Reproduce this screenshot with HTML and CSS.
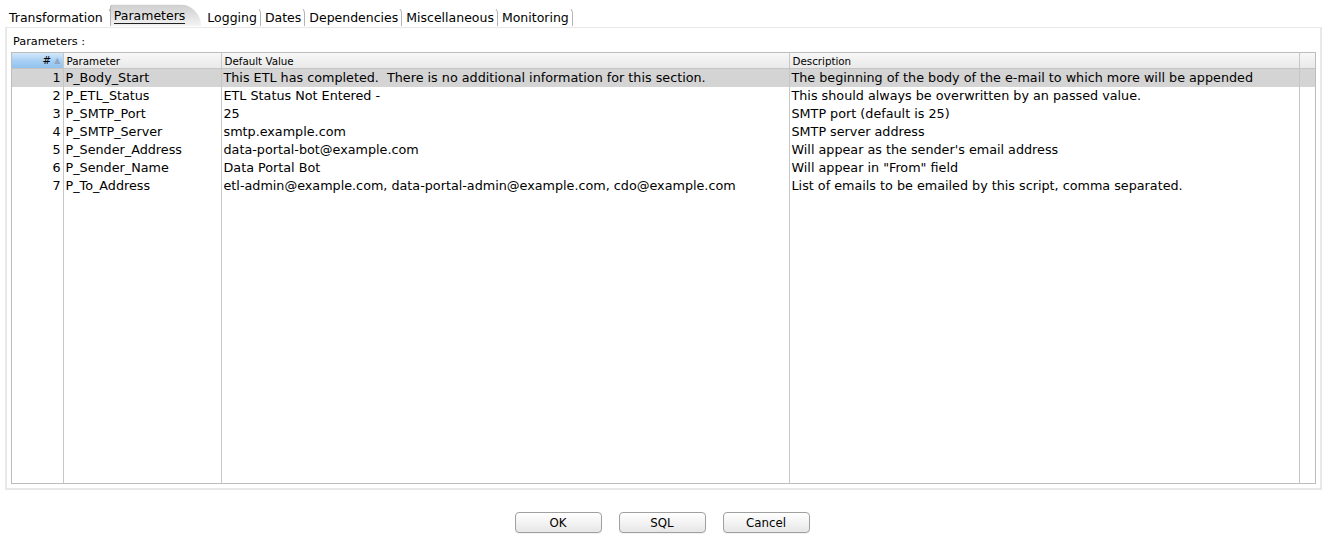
FILE: index.html
```html
<!DOCTYPE html>
<html>
<head>
<meta charset="utf-8">
<link rel="stylesheet" href="styles.css">
</head>
<body>
<div class="tabs">
  <span class="tab first">Transformation</span>
  <span class="tab active"><span class="u">Parameters</span></span>
  <span class="tab">Logging</span>
  <span class="tab">Dates</span>
  <span class="tab">Dependencies</span>
  <span class="tab">Miscellaneous</span>
  <span class="tab">Monitoring</span>
</div>
<div class="panel">
  <div class="label">Parameters :</div>
  <div class="grid-wrap">
    <table class="grid">
      <colgroup>
        <col class="c1"><col class="c2"><col class="c3"><col class="c4"><col class="c5">
      </colgroup>
      <thead>
        <tr>
          <th class="num sorted"># <span class="arrow">▲</span></th>
          <th>Parameter</th>
          <th>Default Value</th>
          <th>Description</th>
          <th></th>
        </tr>
      </thead>
      <tbody>
        <tr class="sel"><td class="num">1</td><td>P_Body_Start</td><td>This ETL has completed.&nbsp; There is no additional information for this section.</td><td>The beginning of the body of the e-mail to which more will be appended</td><td></td></tr>
        <tr><td class="num">2</td><td>P_ETL_Status</td><td>ETL Status Not Entered -</td><td>This should always be overwritten by an passed value.</td><td></td></tr>
        <tr><td class="num">3</td><td>P_SMTP_Port</td><td>25</td><td>SMTP port (default is 25)</td><td></td></tr>
        <tr><td class="num">4</td><td>P_SMTP_Server</td><td>smtp.example.com</td><td>SMTP server address</td><td></td></tr>
        <tr><td class="num">5</td><td>P_Sender_Address</td><td>data-portal-bot@example.com</td><td>Will appear as the sender's email address</td><td></td></tr>
        <tr><td class="num">6</td><td>P_Sender_Name</td><td>Data Portal Bot</td><td>Will appear in "From" field</td><td></td></tr>
        <tr><td class="num">7</td><td>P_To_Address</td><td>etl-admin@example.com, data-portal-admin@example.com, cdo@example.com</td><td>List of emails to be emailed by this script, comma separated.</td><td></td></tr>
        <tr class="filler"><td></td><td></td><td></td><td></td><td></td></tr>
      </tbody>
    </table>
  </div>
</div>
<div class="buttons">
  <button class="btn">OK</button>
  <button class="btn">SQL</button>
  <button class="btn">Cancel</button>
</div>
</body>
</html>
```

FILE: styles.css
```css
html, body {
  margin: 0;
  padding: 0;
  background: #ffffff;
}
body {
  width: 1327px;
  height: 544px;
  overflow: hidden;
  font-family: "DejaVu Sans", Verdana, sans-serif;
  color: #000;
}

/* ---------- tabs ---------- */
.tabs {
  display: flex;
  align-items: flex-end;
  height: 26px;
  padding-left: 5px;
  box-sizing: border-box;
}
.tab {
  display: inline-flex;
  align-items: center;
  height: 19px;
  padding: 0 3px 0 4px;
  font-size: 12.5px;
  border-right: 1px solid #b4b4b4;
  border-top: 1px solid transparent;
  border-top-right-radius: 6px;
  box-sizing: border-box;
  white-space: nowrap;
}
.tab.first {
  padding-right: 7px;
}
.tab.active {
  height: 22px;
  padding-right: 16px;
  margin-right: 2px;
  border-right: none;
  border-left: 1px solid #b4b4b4;
  border-top-left-radius: 4px;
  border-top-right-radius: 22px 22px;
  background: linear-gradient(#cfcfcf, #e4e4e4 60%, #f4f4f4);
  padding-left: 3px;
  margin-left: -1px;
}
.tab.active .u {
  border-bottom: 1px solid #222;
  line-height: 14px;
  padding-top: 2px;
}

/* ---------- panel ---------- */
.panel {
  margin: 1px 5px 0 5px;
  height: 463px;
  border: 2px solid #e8e8e8;
  border-top-width: 1px;
  box-sizing: border-box;
  padding: 7px 4px 4px 4px;
  display: flex;
  flex-direction: column;
}
.label {
  font-size: 11.3px;
  height: 17px;
  line-height: 13px;
  padding-left: 2px;
}
.grid-wrap {
  flex: 1;
  border: 1px solid #bdbdbd;
  display: flex;
}
.grid {
  width: 100%;
  height: 100%;
  border-collapse: collapse;
  table-layout: fixed;
}
.c1 { width: 51px; }
.c2 { width: 158px; }
.c3 { width: 568px; }
.c4 { width: 510px; }
.c5 { width: 16px; }

.grid th {
  height: 14px;
  font-size: 10.3px;
  font-weight: normal;
  text-align: left;
  padding: 0 0 0 3px;
  background: linear-gradient(#f7f7f7, #e9e9e9);
  border-bottom: 1px solid #c4c4c4;
  border-left: 1px solid #c8c8c8;
  white-space: nowrap;
  overflow: hidden;
  line-height: 14px;
}
.grid th:first-child { border-left: none; }
.grid th.sorted {
  background: linear-gradient(#d3e8fb, #a9d0f3 50%, #91c2ef);
  text-align: right;
  padding-right: 2px;
}
.arrow {
  color: #8fa8bf;
  font-size: 8px;
  vertical-align: 1px;
}
.grid td {
  height: 18px;
  font-size: 12.75px;
  padding: 0 0 0 2px;
  border-left: 1px solid #c6c6c6;
  white-space: nowrap;
  overflow: hidden;
  line-height: 18px;
}
.grid td:first-child { border-left: none; }
.grid td.num {
  text-align: right;
  padding-right: 2px;
}
.grid tr.sel td {
  background: #d4d4d4;
}
.grid tr.filler td {
  height: auto;
}

/* ---------- buttons ---------- */
.buttons {
  display: flex;
  justify-content: center;
  gap: 17px;
  padding-top: 22px;
  padding-right: 3px;
}
.btn {
  width: 87px;
  height: 21px;
  font-family: "DejaVu Sans", Verdana, sans-serif;
  font-size: 11.8px;
  color: #000;
  border: 1px solid #a0a0a0;
  border-radius: 4px;
  background: linear-gradient(#ffffff, #f3f3f3 50%, #e6e6e6);
  padding: 0;
  box-shadow: 0 1px 0 rgba(0,0,0,0.05);
}
```
